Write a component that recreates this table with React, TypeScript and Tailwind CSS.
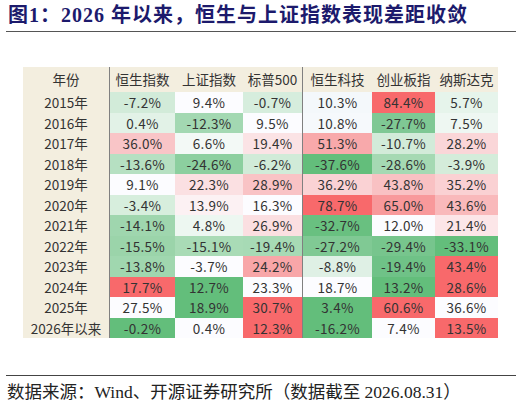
import React from 'react';

const headers = ['恒生指数', '上证指数', '标普500', '恒生科技', '创业板指', '纳斯达克'];

// each cell: [value, background class]
const rows: { year: string; cells: [string, string][] }[] = [
  { year: '2015年', cells: [['-7.2%', 'bg-[#d2ebd9]'], ['9.4%', 'bg-[#fcfcff]'], ['-0.7%', 'bg-[#d6eddd]'], ['10.3%', 'bg-[#f4f8fb]'], ['84.4%', 'bg-[#f8696b]'], ['5.7%', 'bg-[#e6f4eb]']] },
  { year: '2016年', cells: [['0.4%', 'bg-[#e2f2e7]'], ['-12.3%', 'bg-[#a3d8b2]'], ['9.5%', 'bg-[#fcfcff]'], ['10.8%', 'bg-[#f6f9fc]'], ['-27.7%', 'bg-[#7fc894]'], ['7.5%', 'bg-[#eef7f2]']] },
  { year: '2017年', cells: [['36.0%', 'bg-[#f9c5c7]'], ['6.6%', 'bg-[#f3f9f6]'], ['19.4%', 'bg-[#fbe3e5]'], ['51.3%', 'bg-[#f8a9ab]'], ['-10.7%', 'bg-[#d2ebd9]'], ['28.2%', 'bg-[#fad6d8]']] },
  { year: '2018年', cells: [['-13.6%', 'bg-[#b6e0c2]'], ['-24.6%', 'bg-[#8ccf9f]'], ['-6.2%', 'bg-[#d1ebd8]'], ['-37.6%', 'bg-[#63be7b]'], ['-28.6%', 'bg-[#a5d9b3]'], ['-3.9%', 'bg-[#d4ecda]']] },
  { year: '2019年', cells: [['9.1%', 'bg-[#fcfcff]'], ['22.3%', 'bg-[#fbe0e2]'], ['28.9%', 'bg-[#f9c3c5]'], ['36.2%', 'bg-[#fad2d4]'], ['43.8%', 'bg-[#f9c1c3]'], ['35.2%', 'bg-[#fad1d3]']] },
  { year: '2020年', cells: [['-3.4%', 'bg-[#d7eedd]'], ['13.9%', 'bg-[#fcf1f3]'], ['16.3%', 'bg-[#fcfcff]'], ['78.7%', 'bg-[#f8696b]'], ['65.0%', 'bg-[#f8999b]'], ['43.6%', 'bg-[#f9b9bb]']] },
  { year: '2021年', cells: [['-14.1%', 'bg-[#9fd6ae]'], ['4.8%', 'bg-[#edf7f1]'], ['26.9%', 'bg-[#fbdfe1]'], ['-32.7%', 'bg-[#69c080]'], ['12.0%', 'bg-[#fcfcff]'], ['21.4%', 'bg-[#fce6e8]']] },
  { year: '2022年', cells: [['-15.5%', 'bg-[#9bd4aa]'], ['-15.1%', 'bg-[#a9dbb6]'], ['-19.4%', 'bg-[#a7dab5]'], ['-27.2%', 'bg-[#80c994]'], ['-29.4%', 'bg-[#77c58d]'], ['-33.1%', 'bg-[#63be7b]']] },
  { year: '2023年', cells: [['-13.8%', 'bg-[#a0d7af]'], ['-3.7%', 'bg-[#fcfcff]'], ['24.2%', 'bg-[#f8a6a8]'], ['-8.8%', 'bg-[#dff0e5]'], ['-19.4%', 'bg-[#6fc287]'], ['43.4%', 'bg-[#f8696b]']] },
  { year: '2024年', cells: [['17.7%', 'bg-[#f8696b]'], ['12.7%', 'bg-[#63be7b]'], ['23.3%', 'bg-[#fcfcff]'], ['18.7%', 'bg-[#fcfcff]'], ['13.2%', 'bg-[#63be7b]'], ['28.6%', 'bg-[#f8696b]']] },
  { year: '2025年', cells: [['27.5%', 'bg-[#fcfcff]'], ['18.9%', 'bg-[#63be7b]'], ['30.7%', 'bg-[#f8696b]'], ['3.4%', 'bg-[#63be7b]'], ['60.6%', 'bg-[#f8696b]'], ['36.6%', 'bg-[#fcfcff]']] },
  { year: '2026年以来', cells: [['-0.2%', 'bg-[#63be7b]'], ['0.4%', 'bg-[#fcfcff]'], ['12.3%', 'bg-[#f8696b]'], ['-16.2%', 'bg-[#63be7b]'], ['7.4%', 'bg-[#fcfcff]'], ['13.5%', 'bg-[#f8696b]']] },
];

const sans = "font-['Noto_Sans_CJK_SC','Noto_Sans',sans-serif]";
const serif = "font-['Liberation_Serif','Noto_Sans_CJK_SC',serif]";

const App = () => {
  return (
    <div className="w-[522px] h-[406px] bg-white flex flex-col">
      {/* title */}
      <div className={`mx-[6px] h-[32px] border-b border-[#555] pl-[2px] pt-[3px] text-[20px] leading-[24px] tracking-[1px] font-bold text-[#1c1a6c] whitespace-nowrap ${serif}`}>
        图1：2026 年以来，恒生与上证指数表现差距收敛
      </div>

      {/* table */}
      <div className={`ml-[23px] mt-[35px] grid grid-cols-[87px_65px_68px_60px_69px_63px_63px] text-[13.5px] text-[#333] ${sans}`}>
        <div className="h-[25px] flex items-center justify-center bg-[#f3eedf] border-r border-[#808080]">年份</div>
        {headers.map((h, i) => (
          <div
            key={h}
            className={`h-[25px] flex items-center justify-center bg-[#f3eedf] whitespace-nowrap ${i === 2 ? 'border-r border-[#808080]' : ''}`}
          >
            {h}
          </div>
        ))}
        {rows.map((r) => (
          <React.Fragment key={r.year}>
            <div className="h-[20.5px] flex items-center justify-center bg-[#f3eedf] border-r border-[#808080] whitespace-nowrap">
              {r.year}
            </div>
            {r.cells.map(([v, bg], i) => (
              <div
                key={i}
                className={`h-[20.5px] flex items-center justify-center tracking-[0.3px] ${bg} ${i === 2 ? 'border-r border-[#808080]' : ''}`}
              >
                {v}
              </div>
            ))}
          </React.Fragment>
        ))}
      </div>

      {/* source */}
      <div className={`mt-auto mx-[6px] h-[31px] border-t border-[#444] pl-[1px] pt-[5px] text-[17.5px] leading-[22px] text-[#222] whitespace-nowrap ${serif}`}>
        数据来源：Wind、开源证券研究所（数据截至 2026.08.31）
      </div>
    </div>
  );
};

export default App;
